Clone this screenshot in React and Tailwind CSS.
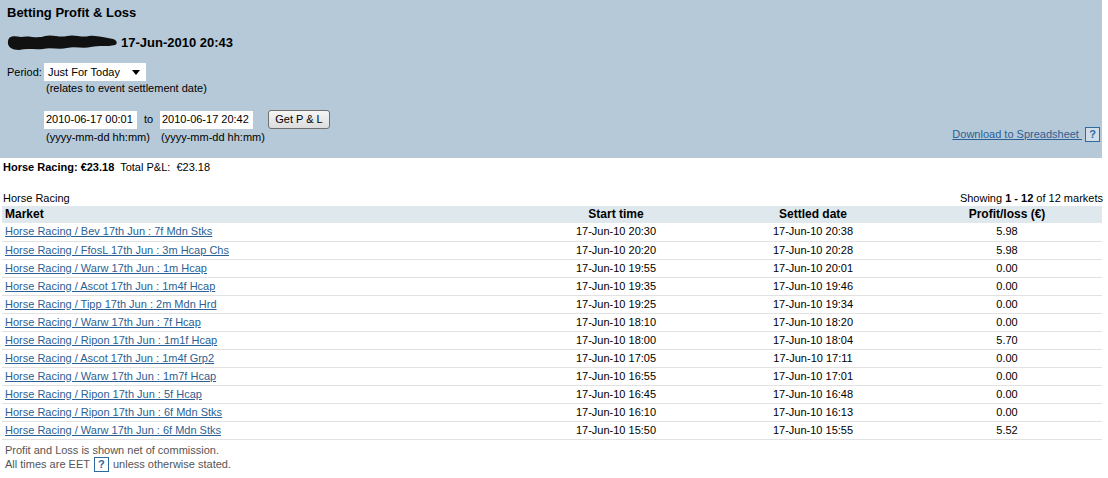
import React from 'react';

const rows = [
  ['Horse Racing / Bev 17th Jun : 7f Mdn Stks', '17-Jun-10 20:30', '17-Jun-10 20:38', '5.98'],
  ['Horse Racing / FfosL 17th Jun : 3m Hcap Chs', '17-Jun-10 20:20', '17-Jun-10 20:28', '5.98'],
  ['Horse Racing / Warw 17th Jun : 1m Hcap', '17-Jun-10 19:55', '17-Jun-10 20:01', '0.00'],
  ['Horse Racing / Ascot 17th Jun : 1m4f Hcap', '17-Jun-10 19:35', '17-Jun-10 19:46', '0.00'],
  ['Horse Racing / Tipp 17th Jun : 2m Mdn Hrd', '17-Jun-10 19:25', '17-Jun-10 19:34', '0.00'],
  ['Horse Racing / Warw 17th Jun : 7f Hcap', '17-Jun-10 18:10', '17-Jun-10 18:20', '0.00'],
  ['Horse Racing / Ripon 17th Jun : 1m1f Hcap', '17-Jun-10 18:00', '17-Jun-10 18:04', '5.70'],
  ['Horse Racing / Ascot 17th Jun : 1m4f Grp2', '17-Jun-10 17:05', '17-Jun-10 17:11', '0.00'],
  ['Horse Racing / Warw 17th Jun : 1m7f Hcap', '17-Jun-10 16:55', '17-Jun-10 17:01', '0.00'],
  ['Horse Racing / Ripon 17th Jun : 5f Hcap', '17-Jun-10 16:45', '17-Jun-10 16:48', '0.00'],
  ['Horse Racing / Ripon 17th Jun : 6f Mdn Stks', '17-Jun-10 16:10', '17-Jun-10 16:13', '0.00'],
  ['Horse Racing / Warw 17th Jun : 6f Mdn Stks', '17-Jun-10 15:50', '17-Jun-10 15:55', '5.52'],
];

function HelpBox() {
  return (
    <span className="inline-flex items-center justify-center w-[15px] h-[15px] border border-[#2c6aa0] bg-white/40 text-[#2c6aa0] text-[11px] font-bold leading-none">
      ?
    </span>
  );
}

function Redacted() {
  return (
    <svg width="112" height="18" viewBox="0 0 112 18" className="shrink-0">
      <path
        d="M1 8 C2 2 8 3 14 4 C22 2 30 6 38 3 C46 1 52 5 60 3 C68 1 74 5 82 3 C90 2 98 5 106 6 C110 7 111 11 108 12 C100 14 92 12 84 14 C76 16 68 13 60 15 C52 17 44 14 36 16 C28 17 20 15 12 17 C5 17 0 14 1 8 Z"
        fill="#111"
      />
    </svg>
  );
}

export default function App() {
  return (
    <div className="w-[1108px] h-[478px] bg-white text-[11px] text-black font-['Liberation_Sans',Arial,sans-serif] leading-[13px]">
      <div className="w-[1102px] h-[158px] bg-[#b5c9d8] pl-[7px] pr-[2px] pt-[5px] flex flex-col">
        <h1 className="text-[13px] font-bold leading-[16px]">Betting Profit &amp; Loss</h1>
        <div className="flex items-center gap-[2px] mt-[12px] h-[18px]">
          <Redacted />
          <span className="text-[13px] font-bold">17-Jun-2010 20:43</span>
        </div>
        <div className="flex items-center mt-[12px]">
          <span className="w-[37px]">Period:</span>
          <div className="w-[102px] h-[18px] bg-white flex items-center justify-between pl-[4px] pr-[6px]">
            <span>Just For Today</span>
            <svg width="8" height="5" viewBox="0 0 8 5"><path d="M0 0 H8 L4 5 Z" fill="#000" /></svg>
          </div>
        </div>
        <div className="ml-[39px] mt-[1px]">(relates to event settlement date)</div>
        <div className="flex items-end justify-between mt-[15px]">
          <div className="ml-[37px]">
            <div className="flex items-center">
              <div className="w-[93px] h-[18px] bg-white flex items-center pl-[2px]">2010-06-17 00:01</div>
              <span className="w-[23px] text-center">to</span>
              <div className="w-[93px] h-[18px] bg-white flex items-center pl-[2px]">2010-06-17 20:42</div>
              <button className="ml-[15px] w-[62px] h-[19px] rounded-[3px] border border-[#707070] bg-gradient-to-b from-[#f6f6f6] to-[#dcdcdc] text-[11px]">
                Get P &amp; L
              </button>
            </div>
            <div className="flex mt-[2px] pl-[2px]">
              <span className="w-[115px]">(yyyy-mm-dd hh:mm)</span>
              <span>(yyyy-mm-dd hh:mm)</span>
            </div>
          </div>
          <div className="flex items-center gap-[3px] mb-[2px]">
            <a className="text-[#2c5f94] underline">Download to Spreadsheet&nbsp;</a>
            <HelpBox />
          </div>
        </div>
      </div>

      <div className="pl-[3px] pt-[3px]">
        <b>Horse Racing: €23.18</b>&nbsp; Total P&amp;L:&nbsp; €23.18
      </div>

      <div className="flex justify-between pl-[3px] pr-[5px] mt-[18px]">
        <span>Horse Racing</span>
        <span>
          Showing <b>1 - 12</b> of 12 markets
        </span>
      </div>

      <table className="w-[1100px] ml-[2px] mt-[1px] border-collapse">
        <colgroup>
          <col className="w-[516px]" />
          <col className="w-[196px]" />
          <col className="w-[198px]" />
          <col />
        </colgroup>
        <thead>
          <tr className="bg-[#dfe8ed] h-[17px] text-[12px] font-bold">
            <th className="text-left pl-[3px]">Market</th>
            <th>Start time</th>
            <th>Settled date</th>
            <th>Profit/loss (€)</th>
          </tr>
        </thead>
        <tbody>
          {rows.map((r) => (
            <tr key={r[0]} className="h-[18px] border-b border-[#e2e2e2]">
              <td className="pl-[3px]">
                <a className="text-[#2c5f94] underline">{r[0]}</a>
              </td>
              <td className="text-center">{r[1]}</td>
              <td className="text-center">{r[2]}</td>
              <td className="text-center">{r[3]}</td>
            </tr>
          ))}
        </tbody>
      </table>

      <div className="pl-[5px] pt-[3px] text-[#555] leading-[14px]">
        <div>Profit and Loss is shown net of commission.</div>
        <div className="flex items-center gap-[4px]">
          <span>All times are EET</span>
          <HelpBox />
          <span>unless otherwise stated.</span>
        </div>
      </div>
    </div>
  );
}
